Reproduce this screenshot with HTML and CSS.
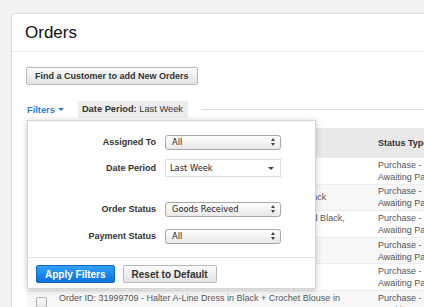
FILE: index.html
```html
<!DOCTYPE html>
<html lang="en">
<head>
  <meta charset="UTF-8">
  <title>Orders</title>
  <meta name="viewport" content="width=device-width, initial-scale=1.0">
  <link rel="stylesheet" href="styles.css">
</head>
<body>
  <div class="page">
    <div class="card">
      <div class="card-header">Orders</div>
      <div class="card-body">
        <button class="btn">Find a Customer to add New Orders</button>

        <div class="filter-bar">
          <a class="filter-toggle" href="#">Filters <span class="caret"></span></a>
          <span class="filter-tag"><b>Date Period:</b> Last Week</span>
          <span class="filter-rule"></span>

          <!-- Filters dropdown, open -->
          <div class="filter-panel">
            <div class="filter-form">
              <div class="form-row">
                <label>Assigned To</label>
                <div class="select">All <span class="updown"></span></div>
              </div>
              <div class="form-row">
                <label>Date Period</label>
                <div class="select flat">Last Week <span class="caret dark"></span></div>
              </div>
              <div class="form-row gap">
                <label>Order Status</label>
                <div class="select">Goods Received <span class="updown"></span></div>
              </div>
              <div class="form-row last">
                <label>Payment Status</label>
                <div class="select">All <span class="updown"></span></div>
              </div>
            </div>
            <div class="filter-footer">
              <button class="btn btn-primary">Apply Filters</button>
              <button class="btn">Reset to Default</button>
            </div>
          </div>
        </div>

        <div class="orders">
          <div class="orders-head">
            <div class="col-check"></div>
            <div class="col-item">Order</div>
            <div class="col-status">Status Type</div>
          </div>
          <div class="orders-row">
            <div class="col-check"><span class="checkbox"></span></div>
            <div class="col-item">Order ID: 31999715 - Sheer Panel Maxi Dress</div>
            <div class="col-status">Purchase - Awaiting Payment</div>
          </div>
          <div class="orders-row">
            <div class="col-check"><span class="checkbox"></span></div>
            <div class="col-item">Order ID: 31999714 - Sleeveless Pleated Skater Tie Dress in Black</div>
            <div class="col-status">Purchase - Awaiting Payment</div>
          </div>
          <div class="orders-row">
            <div class="col-check"><span class="checkbox"></span></div>
            <div class="col-item">Order ID: 31999713 - Colour Block Bodycon Dress in Cream and Black, Size 10</div>
            <div class="col-status">Purchase - Awaiting Payment</div>
          </div>
          <div class="orders-row">
            <div class="col-check"><span class="checkbox"></span></div>
            <div class="col-item">Order ID: 31999712 - Lace Shift Dress</div>
            <div class="col-status">Purchase - Awaiting Payment</div>
          </div>
          <div class="orders-row">
            <div class="col-check"><span class="checkbox"></span></div>
            <div class="col-item">Order ID: 31999710 - Floral Tea Dress</div>
            <div class="col-status">Purchase - Awaiting Payment</div>
          </div>
          <div class="orders-row">
            <div class="col-check top"><span class="checkbox"></span></div>
            <div class="col-item">Order ID: 31999709 - Halter A-Line Dress in Black + Crochet Blouse in Ivory</div>
            <div class="col-status">Purchase - Awaiting Payment</div>
          </div>
        </div>
      </div>
    </div>
  </div>
</body>
</html>
```

FILE: styles.css
```css
body {
  margin: 0;
  background: #f2f2f2;
  font-family: 'Liberation Sans', Arial, sans-serif;
  color: #333;
  overflow: hidden;
}

.page {
  padding: 13px 0 0 11px;
}

.card {
  width: 620px;
  background: #fff;
  border: 1px solid #dadada;
  border-radius: 4px;
}

.card-header {
  height: 37px;
  line-height: 37px;
  padding-left: 13px;
  font-size: 17px;
  color: #111;
  border-bottom: 1px solid #e6e6e6;
}

.card-body {
  padding: 15px 0 0 14px;
}

.btn {
  height: 18px;
  padding: 0 8px;
  font-family: 'Liberation Sans', Arial, sans-serif;
  font-size: 9px;
  font-weight: 700;
  color: #333;
  background: linear-gradient(#fbfbfb, #e3e3e3);
  border: 1px solid #b9b9b9;
  border-radius: 2px;
  display: block;
}

/* filter bar */
.filter-bar {
  position: relative;
  display: flex;
  align-items: center;
  height: 17px;
  margin-top: 16px;
}

.filter-toggle {
  margin-left: 1px;
  font-size: 9.3px;
  font-weight: 700;
  color: #2b7fd8;
  text-decoration: none;
  display: flex;
  align-items: center;
}

.caret {
  display: inline-block;
  width: 0;
  height: 0;
  margin-left: 3px;
  border-left: 3px solid transparent;
  border-right: 3px solid transparent;
  border-top: 3px solid #2b7fd8;
}
.caret.dark {
  border-top-color: #444;
  margin-right: 6px;
}

.filter-tag {
  margin-left: 14px;
  height: 17px;
  line-height: 17px;
  padding: 0 5px 0 4px;
  font-size: 9.3px;
  background: #ececec;
  color: #333;
}

.filter-rule {
  flex: 1;
  margin-left: 14px;
  border-top: 1px solid #dcdcdc;
}

.filter-panel {
  position: absolute;
  top: 19px;
  left: 1px;
  z-index: 2;
  width: 287px;
  background: #fff;
  border: 1px solid #d4d4d4;
  box-shadow: 0 1px 6px rgba(0, 0, 0, 0.22);
}

.filter-form {
  padding: 8px 0 8px 0;
}

.form-row {
  display: flex;
  align-items: center;
  height: 26px;
}
.form-row.gap {
  margin-top: 15px;
}
.form-row.last {
  margin-top: 1px;
}

.form-row label {
  width: 128px;
  margin-right: 9px;
  text-align: right;
  font-size: 9px;
  font-weight: 700;
  color: #333;
}

.select {
  box-sizing: border-box;
  width: 116px;
  height: 15px;
  padding-left: 6px;
  display: flex;
  align-items: center;
  justify-content: space-between;
  font-family: 'DejaVu Sans', sans-serif;
  font-size: 8.3px;
  color: #222;
  background: linear-gradient(#ffffff, #e8e8e8);
  border: 1px solid #a8a8a8;
  border-radius: 3px;
}
.select.flat {
  height: 18px;
  padding-left: 4px;
  background: #fff;
  border: 1px solid #dedede;
  border-radius: 0;
}

.updown {
  position: relative;
  width: 5px;
  height: 8px;
  margin-right: 4px;
}
.updown::before,
.updown::after {
  content: "";
  position: absolute;
  left: 0;
  border-left: 2.5px solid transparent;
  border-right: 2.5px solid transparent;
}
.updown::before {
  top: 0;
  border-bottom: 3px solid #444;
}
.updown::after {
  bottom: 0;
  border-top: 3px solid #444;
}

.filter-footer {
  display: flex;
  gap: 8px;
  padding: 7px 8px 5px 8px;
  border-top: 1px solid #e3e3e3;
}
.filter-footer .btn {
  font-size: 10px;
}

.btn-primary {
  color: #fff;
  background: linear-gradient(#33a0f6, #0a72dc);
  border-color: #0b68c9;
}

/* orders table behind the panel */
.orders {
  margin: 10px 0 0 1px;
  font-size: 9px;
  color: #555;
}

.orders-head,
.orders-row {
  display: flex;
  align-items: center;
}

.orders-head {
  height: 29px;
  background: #e8e8e8;
  font-weight: 700;
  color: #333;
}

.orders-row {
  height: 26.6px;
  line-height: 12px;
  border-top: 1px solid #ececec;
  box-sizing: border-box;
}
.orders-row:nth-child(odd) {
  background: #f7f7f7;
}

.col-check {
  width: 32px;
  flex: none;
}
.col-check.top {
  align-self: flex-start;
  margin-top: 6px;
}

.col-item {
  width: 300px;
  padding-right: 19px;
  flex: none;
}

.col-status {
  width: 76px;
  flex: none;
}

.checkbox {
  display: block;
  width: 9px;
  height: 9px;
  margin-left: 9px;
  border: 1px solid #b0b0b0;
  border-radius: 2px;
  background: linear-gradient(#fff, #e6e6e6);
}
```
